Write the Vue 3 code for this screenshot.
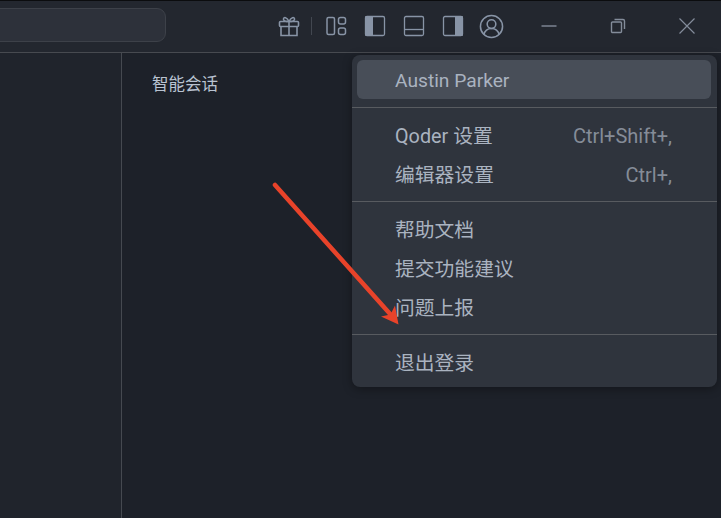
<script setup>
const groups = [
  [
    { label: 'Qoder 设置', keys: 'Ctrl+Shift+,' },
    { label: '编辑器设置', keys: 'Ctrl+,' },
  ],
  [{ label: '帮助文档' }, { label: '提交功能建议' }, { label: '问题上报' }],
  [{ label: '退出登录' }],
]
</script>

<template>
  <div class="window">
    <header class="titlebar">
      <div class="search"></div>
      <div class="tools">
        <button class="tool">
          <svg width="24" height="24" viewBox="0 0 24 24" fill="none" stroke="currentColor" stroke-width="1.6">
            <rect x="2.500" y="7.500" width="19" height="5" rx="1" />
            <path d="M4 12.500V21.500h16v-9M12 7.500V21.500" />
            <path d="M12 7.500C10 3 6.500 2.500 6.500 5.200 6.500 7 9 7.500 12 7.500ZM12 7.500C14 3 17.500 2.500 17.500 5.200 17.500 7 15 7.500 12 7.500Z" />
          </svg>
        </button>
        <span class="divider"></span>
        <button class="tool">
          <svg width="22" height="22" viewBox="0 0 22 22" fill="none" stroke="currentColor" stroke-width="1.5">
            <rect x="2" y="2.500" width="7.500" height="17" rx="1.500" />
            <rect x="13.500" y="2.500" width="7" height="6.500" rx="2" />
            <rect x="13.500" y="13" width="7" height="6.500" rx="2" />
          </svg>
        </button>
        <button class="tool">
          <svg width="22" height="22" viewBox="0 0 22 22" fill="none">
            <path d="M2 1h7v20H2a1 1 0 0 1-1-1V2a1 1 0 0 1 1-1Z" fill="currentColor" />
            <rect x="1.500" y="1.500" width="19" height="19" rx="1.500" stroke="currentColor" stroke-width="1.300" />
          </svg>
        </button>
        <button class="tool">
          <svg width="22" height="22" viewBox="0 0 22 22" fill="none" stroke="currentColor" stroke-width="1.300">
            <rect x="1.500" y="1.500" width="19" height="19" rx="1.500" />
            <path d="M1.500 14.500h19" />
          </svg>
        </button>
        <button class="tool">
          <svg width="22" height="22" viewBox="0 0 22 22" fill="none">
            <path d="M13 1h7a1 1 0 0 1 1 1v18a1 1 0 0 1-1 1h-7Z" fill="currentColor" />
            <rect x="1.500" y="1.500" width="19" height="19" rx="1.500" stroke="currentColor" stroke-width="1.300" />
          </svg>
        </button>
        <button class="tool">
          <svg width="25" height="25" viewBox="0 0 26 26" fill="none" stroke="currentColor" stroke-width="1.600">
            <circle cx="13" cy="13" r="11.500" />
            <circle cx="13" cy="10.500" r="4.500" />
            <path d="M5 21.500c1-4 4-6.500 8-6.500s7 2.500 8 6.500" />
          </svg>
        </button>
        <button class="win first">
          <svg width="16" height="16" viewBox="0 0 16 16" fill="none" stroke="currentColor" stroke-width="1.400">
            <path d="M0.500 8h15" />
          </svg>
        </button>
        <button class="win">
          <svg width="16" height="16" viewBox="0 0 16 16" fill="none" stroke="currentColor" stroke-width="1.400">
            <rect x="1.500" y="4" width="10" height="10.500" rx="1" />
            <path d="M4.500 1.500h8.500a1.500 1.500 0 0 1 1.500 1.500v8" />
          </svg>
        </button>
        <button class="win">
          <svg width="16" height="16" viewBox="0 0 16 16" fill="none" stroke="currentColor" stroke-width="1.200">
            <path d="M0.500 0.500l15 15M15.500 0.500l-15 15" />
          </svg>
        </button>
      </div>
    </header>

    <div class="body">
      <aside class="sidebar"></aside>
      <main class="main">
        <div class="title">智能会话</div>
      </main>
    </div>

    <div class="menu">
      <div class="menu-item active"><span class="name">Austin Parker</span></div>
      <template v-for="(group, i) in groups" :key="i">
        <div class="sep"></div>
        <div v-for="item in group" :key="item.label" class="menu-item">
          <span class="label">{{ item.label }}</span>
          <span v-if="item.keys" class="keys">{{ item.keys }}</span>
        </div>
      </template>
    </div>

    <svg class="arrow" width="721" height="518" viewBox="0 0 721 518" fill="none">
      <path d="M275 185L391 315" stroke="#e8432a" stroke-width="4.500" stroke-linecap="round" />
      <path d="M398.500 324.500L381 316.500 390.500 314.500 395 305.500Z" fill="#e8432a" />
    </svg>
  </div>
</template>

<style scoped>
.window {
  position: relative;
  width: 721px;
  height: 518px;
  overflow: hidden;
  background: #1d2129;
  font-family: Roboto, "Noto Sans CJK SC", sans-serif;
}

.titlebar {
  display: flex;
  align-items: center;
  justify-content: space-between;
  box-sizing: border-box;
  height: 53px;
  padding-bottom: 1px;
  background: #23272f;
  border-top: 1px solid #0b0c0e;
  border-bottom: 1px solid #474a50;
}

.search {
  width: 177px;
  height: 34px;
  margin-left: -11px;
  margin-bottom: 2px;
  box-sizing: border-box;
  background: #2d313a;
  border: 1px solid #3d4149;
  border-radius: 9px;
}

.tools {
  display: flex;
  align-items: center;
  height: 100%;
}

.tool,
.win {
  display: flex;
  align-items: center;
  justify-content: center;
  padding: 0;
  border: none;
  background: none;
  color: #8894a6;
}

.tool {
  width: 39px;
  height: 39px;
}

.win {
  width: 69px;
  height: 51px;
  color: #838c9a;
}

.win.first {
  margin-left: 3px;
}

.divider {
  width: 1px;
  height: 18px;
  margin: 0 4px 0 3px;
  background: #424750;
}

.body {
  display: flex;
  height: 465px;
}

.sidebar {
  width: 121px;
  background: #20242c;
  border-right: 1px solid #454950;
}

.main {
  flex: 1;
  padding: 20px 0 0 30px;
}

.title {
  font-size: 16.500px;
  line-height: 24px;
  color: #b9c3d1;
}

.menu {
  position: absolute;
  left: 352px;
  top: 55px;
  width: 365px;
  box-sizing: border-box;
  padding: 5px 6px 6px 5px;
  background: #2f343d;
  border-radius: 8px;
  box-shadow: 0 2px 10px rgba(0, 0, 0, 0.35);
}

.menu-item {
  display: flex;
  align-items: center;
  justify-content: space-between;
  height: 39px;
  padding: 0 39px 0 38px;
  font-size: 19.800px;
  color: #aab3c0;
}

.menu-item.active {
  background: #484e58;
  border-radius: 6px;
}

.name {
  margin-top: 2px;
  font-size: 19.200px;
}

.label {
  margin-top: -1px;
}

.keys {
  margin-top: 3px;
  font-size: 20px;
  color: #858c98;
}

.sep {
  height: 1px;
  margin: 8px -6px 7px -5px;
  background: #585b60;
}

.arrow {
  position: absolute;
  left: 0;
  top: 0;
  pointer-events: none;
}
</style>
